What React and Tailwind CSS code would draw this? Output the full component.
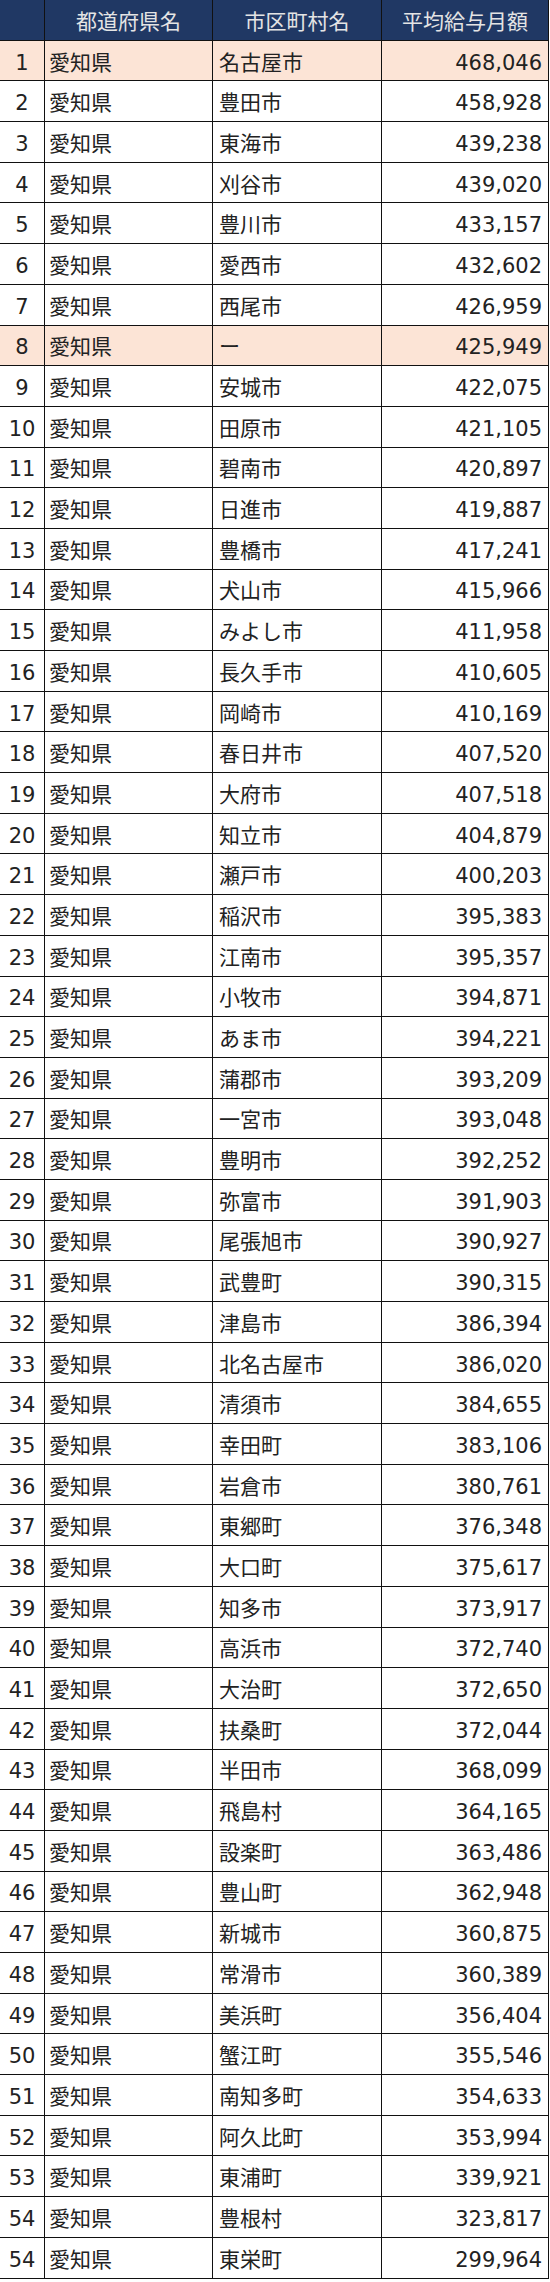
import React from 'react'

const rows = [
  [1, '名古屋市', '468,046', true],
  [2, '豊田市', '458,928'],
  [3, '東海市', '439,238'],
  [4, '刈谷市', '439,020'],
  [5, '豊川市', '433,157'],
  [6, '愛西市', '432,602'],
  [7, '西尾市', '426,959'],
  [8, 'ー', '425,949', true],
  [9, '安城市', '422,075'],
  [10, '田原市', '421,105'],
  [11, '碧南市', '420,897'],
  [12, '日進市', '419,887'],
  [13, '豊橋市', '417,241'],
  [14, '犬山市', '415,966'],
  [15, 'みよし市', '411,958'],
  [16, '長久手市', '410,605'],
  [17, '岡崎市', '410,169'],
  [18, '春日井市', '407,520'],
  [19, '大府市', '407,518'],
  [20, '知立市', '404,879'],
  [21, '瀬戸市', '400,203'],
  [22, '稲沢市', '395,383'],
  [23, '江南市', '395,357'],
  [24, '小牧市', '394,871'],
  [25, 'あま市', '394,221'],
  [26, '蒲郡市', '393,209'],
  [27, '一宮市', '393,048'],
  [28, '豊明市', '392,252'],
  [29, '弥富市', '391,903'],
  [30, '尾張旭市', '390,927'],
  [31, '武豊町', '390,315'],
  [32, '津島市', '386,394'],
  [33, '北名古屋市', '386,020'],
  [34, '清須市', '384,655'],
  [35, '幸田町', '383,106'],
  [36, '岩倉市', '380,761'],
  [37, '東郷町', '376,348'],
  [38, '大口町', '375,617'],
  [39, '知多市', '373,917'],
  [40, '高浜市', '372,740'],
  [41, '大治町', '372,650'],
  [42, '扶桑町', '372,044'],
  [43, '半田市', '368,099'],
  [44, '飛島村', '364,165'],
  [45, '設楽町', '363,486'],
  [46, '豊山町', '362,948'],
  [47, '新城市', '360,875'],
  [48, '常滑市', '360,389'],
  [49, '美浜町', '356,404'],
  [50, '蟹江町', '355,546'],
  [51, '南知多町', '354,633'],
  [52, '阿久比町', '353,994'],
  [53, '東浦町', '339,921'],
  [54, '豊根村', '323,817'],
  // 元の表でも54が2回続いている
  [54, '東栄町', '299,964'],
]

const cell = 'h-[40.7px] border-r border-b border-[#111] flex items-center pt-[5px]'

export default function App() {
  return (
    <div className="w-[550px] bg-white font-['DejaVu_Sans','Noto_Sans_CJK_JP',sans-serif] text-[21px] text-[#222] leading-none">
      <div className="grid grid-cols-[45px_168px_169px_167px]">
        {/* header */}
        <div className={`${cell} bg-[#203864] border-[#0d1a33]`} />
        <div className={`${cell} bg-[#203864] border-[#0d1a33] justify-center text-[#e4e4e4]`}>都道府県名</div>
        <div className={`${cell} bg-[#203864] border-[#0d1a33] justify-center text-[#e4e4e4]`}>市区町村名</div>
        <div className={`${cell} bg-[#203864] border-[#0d1a33] justify-center text-[#e4e4e4]`}>平均給与月額</div>

        {rows.map(([rank, city, pay, hl], i) => {
          const bg = hl ? 'bg-[#fce4d6]' : 'bg-white'
          return (
            <React.Fragment key={i}>
              <div className={`${cell} ${bg} justify-center`}>{rank}</div>
              <div className={`${cell} ${bg} pl-[4px]`}>愛知県</div>
              <div className={`${cell} ${bg} pl-[6px]`}>{city}</div>
              <div className={`${cell} ${bg} justify-end pr-[6px]`}>{pay}</div>
            </React.Fragment>
          )
        })}
      </div>
    </div>
  )
}
